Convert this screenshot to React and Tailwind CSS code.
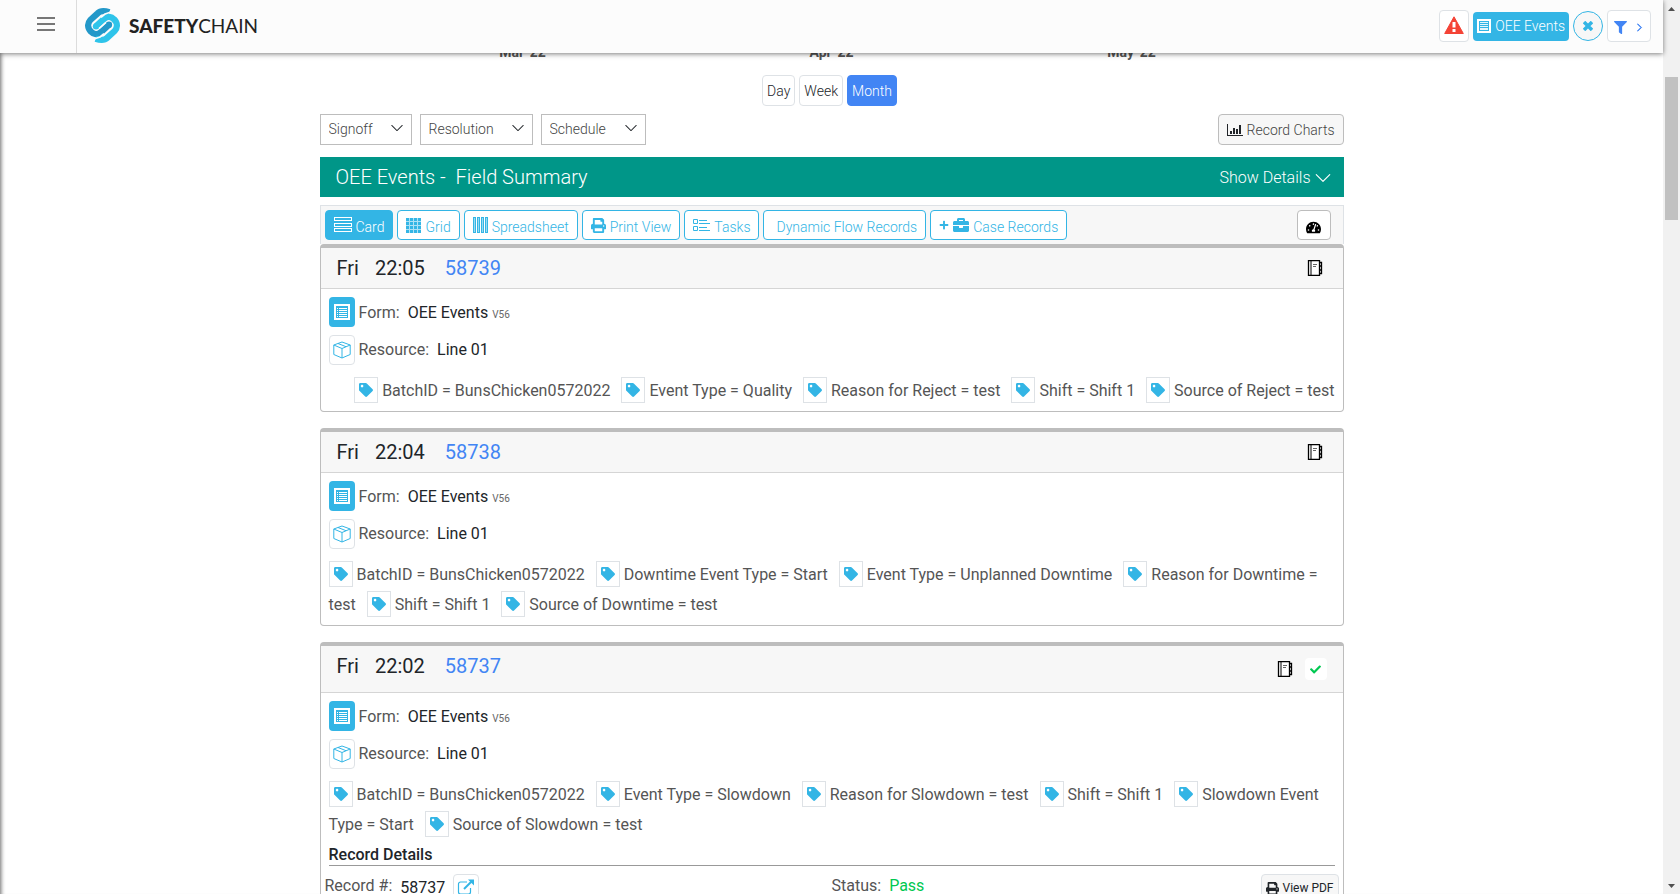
import React, { useId } from "react";
import { FaPrint, FaTag, FaBriefcase, FaPlus, FaFilter, FaTachometerAlt, FaCheck } from "react-icons/fa";
import { BsChevronRight, BsChevronDown } from "react-icons/bs";

function Logo() {
  return (
    <svg viewBox="0 0 105 105" className="size-[35px]" fill="none" strokeWidth="19" strokeLinejoin="round" aria-hidden="true">
      <path d="M72 50 47 73C38 81 26 80 18 71C7 60 7 46 16 36L38 16C47 7 58 8 73 13" stroke="#2398c9" />
      <circle cx="72" cy="50" r="9.500" fill="#2398c9" />
      <path d="M33 55 58 32C67 24 79 25 87 34C98 45 98 59 89 69L67 89C58 98 47 97 32 92" stroke="#2fc4ea" />
      <circle cx="33" cy="55" r="9.500" fill="#2fc4ea" />
      <path d="M78 12 60 18 48 28M27 93 45 87 57 77M42 62 63 43" stroke="#fcfcfc" strokeWidth="5" />
    </svg>
  );
}

function ListIcon({ className }) {
  return (
    <svg viewBox="0 0 16 16" className={className} fill="none" stroke="currentColor" aria-hidden="true" shapeRendering="crispEdges">
      <rect x="1" y="1" width="14" height="14" strokeWidth="2" />
      <path d="M3 4.500h1M5 4.500h8M3 6.500h1M5 6.500h8M3 8.500h1M5 8.500h8M3 10.500h1M5 10.500h8M3 12.500h1M5 12.500h8" />
    </svg>
  );
}

function CardsIcon() {
  return (
    <svg viewBox="0 0 18 16" className="h-4 w-[18px]" fill="none" stroke="currentColor" aria-hidden="true" shapeRendering="crispEdges">
      <path d="M0.500 0.500h17v3h-17zM0.500 6.500h17v3h-17zM0.500 11.500h17v3h-17z" />
    </svg>
  );
}

function GridIcon() {
  return (
    <svg viewBox="0 0 15 15" className="size-[15px]" fill="currentColor" aria-hidden="true" shapeRendering="crispEdges">
      <rect width="15" height="15" opacity="0.4" />
      {[0, 4, 8, 12].map((x) => [0, 4, 8, 12].map((y) => <rect key={`${x}-${y}`} x={x} y={y} width="3" height="3" />))}
    </svg>
  );
}

function ColumnsIcon() {
  return (
    <svg viewBox="0 0 15 16" className="h-4 w-[15px]" fill="currentColor" fillOpacity="0.5" stroke="currentColor" aria-hidden="true" shapeRendering="crispEdges">
      <path d="M0.500 0.500h2v15h-2zM4.500 0.500h2v15h-2zM8.500 0.500h2v15h-2zM12.500 0.500h2v15h-2z" />
    </svg>
  );
}

function TasksIcon() {
  return (
    <svg viewBox="0 0 17 13" className="h-[13px] w-[17px]" fill="none" stroke="currentColor" aria-hidden="true">
      <path d="M0.500 0.500h4v4h-4zM0.500 7.500h4v4h-4zM6 1.500h8M6 4.500h11M6 8.500h8M6 11.500h11" />
    </svg>
  );
}

function BoxIcon() {
  return (
    <svg viewBox="0 0 18 18" className="size-[18px]" fill="none" stroke="#33b5e5" strokeLinejoin="round" aria-hidden="true">
      <path d="M9 1 .8 4v9.500L9 17l8.200-3.500V4ZM.8 4 9 7.500 17.200 4M9 7.500V17M5 2.500l8 3.200" />
    </svg>
  );
}

function JournalIcon() {
  return (
    <svg viewBox="0 0 16 16" className="size-4" fill="none" stroke="#000" aria-hidden="true">
      <path d="M1.500 .500h11v15h-11z" fill="#fff" strokeWidth="1.300" />
      <path d="M4 0v16" />
      <path d="M6 4.500h4M6 6.500h3" stroke="#666" />
      <path d="M13 2.500h1.500v11H13M13 6h1.500M13 10h1.500" strokeWidth="1.300" />
    </svg>
  );
}

function ChartIcon() {
  return (
    <svg viewBox="0 0 16 12" className="h-3 w-4" fill="none" stroke="#212529" aria-hidden="true" shapeRendering="crispEdges">
      <path d="M0.500 0v11.500H16" />
      <path d="M4 7v3M7 4v6M10 5v5M13 1v9" strokeWidth="2" />
    </svg>
  );
}

function WarningIcon() {
  return (
    <svg viewBox="0 0 20 18" className="h-[18px] w-5" aria-hidden="true">
      <path d="M10 0.800 19.300 17.500H0.700Z" fill="#f44336" stroke="#f44336" strokeLinejoin="round" />
      <path d="M8.500 6h3v5.500h-3zM8.500 13h3v3h-3z" fill="#fff" />
    </svg>
  );
}

function ExternalIcon() {
  return (
    <svg viewBox="0 0 18 16" className="h-4 w-[18px]" fill="none" stroke="#33b5e5" aria-hidden="true">
      <path d="M10 3H3.500A2 2 0 0 0 1.500 5v8a2 2 0 0 0 2 2h8a2 2 0 0 0 2-2V9" strokeWidth="1.200" />
      <path d="M7 10 15 2" strokeWidth="2" />
      <path d="M11 .500h6v6Z" fill="#33b5e5" stroke="none" />
    </svg>
  );
}

function FilterSelect({ label, className }) {
  const id = useId();
  return (
    <div className={`relative h-[31px] ${className}`}>
      <label htmlFor={id} className="sr-only">{label}</label>
      <select id={id} className="h-full w-full appearance-none border border-[#bdbdbd] bg-white pb-0.5 pl-2 pr-7 text-sm font-light text-[#444]">
        <option>{label}</option>
      </select>
      <BsChevronDown className="pointer-events-none absolute right-2 top-[7px] size-[14px] text-[#212529]" />
    </div>
  );
}

function ToolButton({ icon, label, active }) {
  return (
    <button
      type="button"
      className={`flex h-[30px] items-center gap-1 rounded border border-[#33b5e5] px-2 text-sm font-light ${
        active ? "bg-[#33b5e5] text-white" : "bg-white text-[#33b5e5]"
      }`}
    >
      {icon}
      <span className="pt-1">{label}</span>
    </button>
  );
}

function TagIcon() {
  return (
    <span className="mr-1 inline-flex h-[26px] w-6 items-center justify-center border border-[#dee2e6] align-[-1px]">
      <FaTag className="size-[14px] -rotate-90 scale-x-[-1] text-[#33b5e5]" />
    </span>
  );
}

function RecordCard({ time, id, tags, passed, children }) {
  return (
    <article className="rounded border border-t-4 border-[#bdbdbd] bg-white">
      <header
        className={`flex items-start justify-between border-b border-[#d5d5d5] bg-[#f7f7f7] pl-4 ${
          passed ? "h-[47px] pr-4" : "h-[41px] pr-5"
        }`}
      >
        <h3 className="flex pt-[5px] text-xl leading-[30px] text-[#212529]">
          <span>Fri</span>
          <span className="ml-4">{time}</span>
          <a href="#record" className="ml-5 text-[#4285f4]">{id}</a>
        </h3>
        <div className="flex items-center gap-3 self-center">
          <JournalIcon />
          {passed && (
            <span className="flex size-[22px] items-center justify-center rounded-sm bg-white">
              <FaCheck className="size-[11px] text-[#00c851]" />
            </span>
          )}
        </div>
      </header>
      <div className="px-2 pb-[5px] pt-2">
        <div className="flex items-center gap-1">
          <span className="flex h-[30px] w-[26px] items-center justify-center rounded bg-[#33b5e5] text-white">
            <ListIcon className="size-4" />
          </span>
          <p className="flex items-baseline gap-1 pt-0.5">
            <span className="text-[#555]">Form:</span>
            <span className="ml-1 text-[#212529]">OEE Events</span>
            <small className="text-[10px] text-[#666]">V56</small>
          </p>
        </div>
        <div className="mt-2 flex items-center gap-1">
          <span className="flex h-[30px] w-[26px] items-center justify-center rounded border border-[#dee2e6]">
            <BoxIcon />
          </span>
          <p className="flex items-baseline gap-1">
            <span className="text-[#555]">Resource:</span>
            <span className="ml-1 text-[#212529]">Line 01</span>
          </p>
        </div>
        <div className="flex justify-end pt-[11px] leading-[30px] text-[#555]">
          <p>
            {tags.map((t, i) => (
              <React.Fragment key={t}>
                {i > 0 && <span className="inline-block w-[7px]" />}
                <TagIcon />
                {t}{" "}
              </React.Fragment>
            ))}
          </p>
        </div>
        {children}
      </div>
    </article>
  );
}

export default function App() {
  return (
    <div className="flex h-screen overflow-hidden bg-white font-[Roboto,sans-serif] text-base text-[#212529]">
      <div className="relative flex min-w-0 flex-1 flex-col">
        <header className="relative z-10 flex h-[53px] shrink-0 items-center bg-[#fcfcfc] pr-3 shadow-[0_1px_5px_rgba(0,0,0,0.5)]">
          <div className="flex h-full w-[77px] items-center justify-end border-r border-[#dcdcdc] pb-[5px] pr-[21px]">
            <button type="button" aria-label="Menu" className="flex w-[18px] flex-col gap-1">
              <span className="h-0.5 bg-[#777]" />
              <span className="h-0.5 bg-[#777]" />
              <span className="h-0.5 bg-[#777]" />
            </button>
          </div>
          <a href="#home" className="flex items-center gap-[9px] pb-0.5 pl-2">
            <Logo />
            <span className="font-[Lato,sans-serif] text-[19px] leading-none text-[#222]">
              <b className="font-black">SAFETY</b>CHAIN
            </span>
          </a>
          <div className="ml-auto flex items-center gap-1 pb-px">
            <button type="button" aria-label="Alerts" className="flex h-8 w-[30px] items-center justify-center rounded border border-[#dee2e6] bg-white pb-0.5">
              <WarningIcon />
            </button>
            <button type="button" className="flex h-[29px] items-center gap-1 rounded bg-[#33b5e5] px-1 text-sm font-light text-white">
              <ListIcon className="size-[14px]" /> OEE Events
            </button>
            <button type="button" aria-label="Clear" className="flex size-[30px] items-center justify-center rounded-full border border-[#33b5e5] bg-[#f7f7f7]">
              <svg viewBox="0 0 10 10" className="size-[10px]" stroke="#33b5e5" strokeWidth="3.500" aria-hidden="true"><path d="M1 1l8 8M9 1l-8 8" /></svg>
            </button>
            <button type="button" aria-label="Filter" className="flex h-8 w-11 items-center justify-center gap-2 rounded border border-[#dee2e6] bg-white pt-0.5 text-[#4285f4]">
              <FaFilter className="size-[13px]" />
              <BsChevronRight className="size-[9px]" strokeWidth="1.500" stroke="currentColor" />
            </button>
          </div>
        </header>

        <main className="min-h-0 flex-1 overflow-hidden shadow-[inset_5px_0_4px_-4px_rgba(0,0,0,0.6)]">
          <div className="mx-auto max-w-[1024px]">
            <div className="-mt-[11px] grid h-[33px] grid-cols-[318fr_300fr_300fr] pl-11 pr-[62px] text-center text-sm font-bold text-[#555]">
              <span>Mar '22</span>
              <span>Apr '22</span>
              <span>May '22</span>
            </div>
            <div className="flex justify-center gap-1 pr-1 text-sm font-light">
              <button type="button" className="h-[31px] rounded border border-[#dee2e6] px-1">Day</button>
              <button type="button" className="h-[31px] rounded border border-[#dee2e6] px-1">Week</button>
              <button type="button" className="h-[31px] rounded border border-[#4285f4] bg-[#4285f4] px-1 text-white">Month</button>
            </div>
            <div className="mt-2 flex gap-2">
              <FilterSelect label="Signoff" className="w-[92px]" />
              <FilterSelect label="Resolution" className="w-[113px]" />
              <FilterSelect label="Schedule" className="w-[105px]" />
              <button type="button" className="ml-auto flex h-[31px] items-center gap-1 rounded border border-[#bdbdbd] bg-[#f7f7f7] px-2 text-sm font-light text-[#444]">
                <ChartIcon /> Record Charts
              </button>
            </div>
            <div className="mt-3 flex h-10 items-center justify-between bg-[#009688] pl-4 pr-3 font-light text-white">
              <h2 className="text-xl">OEE Events - &nbsp;Field Summary</h2>
              <button type="button" className="flex items-center gap-[3px] pt-0.5 text-base">
                Show Details <BsChevronDown className="size-[18px]" />
              </button>
            </div>
            <div className="mt-2 flex h-[39px] gap-1 border-x border-t border-[#dee2e6] bg-[#f7f7f7] pl-1 pr-3 pt-1">
              <ToolButton active icon={<CardsIcon />} label="Card" />
              <ToolButton icon={<GridIcon />} label="Grid" />
              <ToolButton icon={<ColumnsIcon />} label="Spreadsheet" />
              <ToolButton icon={<FaPrint className="size-[15px]" />} label="Print View" />
              <ToolButton icon={<TasksIcon />} label="Tasks" />
              <ToolButton icon={<span />} label="Dynamic Flow Records" />
              <ToolButton icon={<><FaPlus className="size-[10px]" /><FaBriefcase className="size-4" /></>} label="Case Records" />
              <button type="button" aria-label="Dashboard" className="ml-auto flex h-[30px] w-[34px] items-center justify-center rounded border border-[#bdbdbd] bg-white pt-1 text-black">
                <FaTachometerAlt className="size-[15px]" />
              </button>
            </div>
            <div className="flex flex-col gap-4">
              <RecordCard time="22:05" id="58739" tags={["BatchID = BunsChicken0572022", "Event Type = Quality", "Reason for Reject = test", "Shift = Shift 1", "Source of Reject = test"]} />
              <RecordCard time="22:04" id="58738" tags={["BatchID = BunsChicken0572022", "Downtime Event Type = Start", "Event Type = Unplanned Downtime", "Reason for Downtime = test", "Shift = Shift 1", "Source of Downtime = test"]} />
              <RecordCard passed time="22:02" id="58737" tags={["BatchID = BunsChicken0572022", "Event Type = Slowdown", "Reason for Slowdown = test", "Shift = Shift 1", "Slowdown Event Type = Start", "Source of Slowdown = test"]}>
                <h4 className="border-b border-[#999] pt-1 text-base font-medium leading-[21px]">Record Details</h4>
                <div className="-mx-1 flex items-start pt-2">
                  <div className="flex flex-1 gap-2">
                    <span className="text-[#555]">Record #:</span>
                    <span className="pt-0.5">58737</span>
                    <button type="button" aria-label="Open record" className="flex h-[26px] w-[26px] items-center justify-center rounded border border-[#dee2e6]">
                      <ExternalIcon />
                    </button>
                  </div>
                  <div className="flex flex-1 gap-2">
                    <span className="text-[#555]">Status:</span>
                    <span className="text-[#00c851]">Pass</span>
                    <button type="button" className="ml-auto flex h-7 items-center gap-1 rounded border border-[#dee2e6] bg-[#f7f7f7] px-1 text-xs">
                      <FaPrint className="size-[13px]" /> View PDF
                    </button>
                  </div>
                </div>
              </RecordCard>
            </div>
          </div>
        </main>
      </div>
      <div aria-hidden="true" className="flex w-[17px] shrink-0 flex-col items-center justify-between bg-[#f1f1f1] pb-1.5 pt-[7px]">
        <span className="h-1 w-[7px] bg-[#505050] [clip-path:polygon(50%_0,100%_100%,0_100%)]" />
        <span className="mb-auto mt-[66px] h-[143px] w-[13px] bg-[#c1c1c1]" />
        <span className="h-1 w-[7px] bg-[#505050] [clip-path:polygon(0_0,100%_0,50%_100%)]" />
      </div>
    </div>
  );
}
